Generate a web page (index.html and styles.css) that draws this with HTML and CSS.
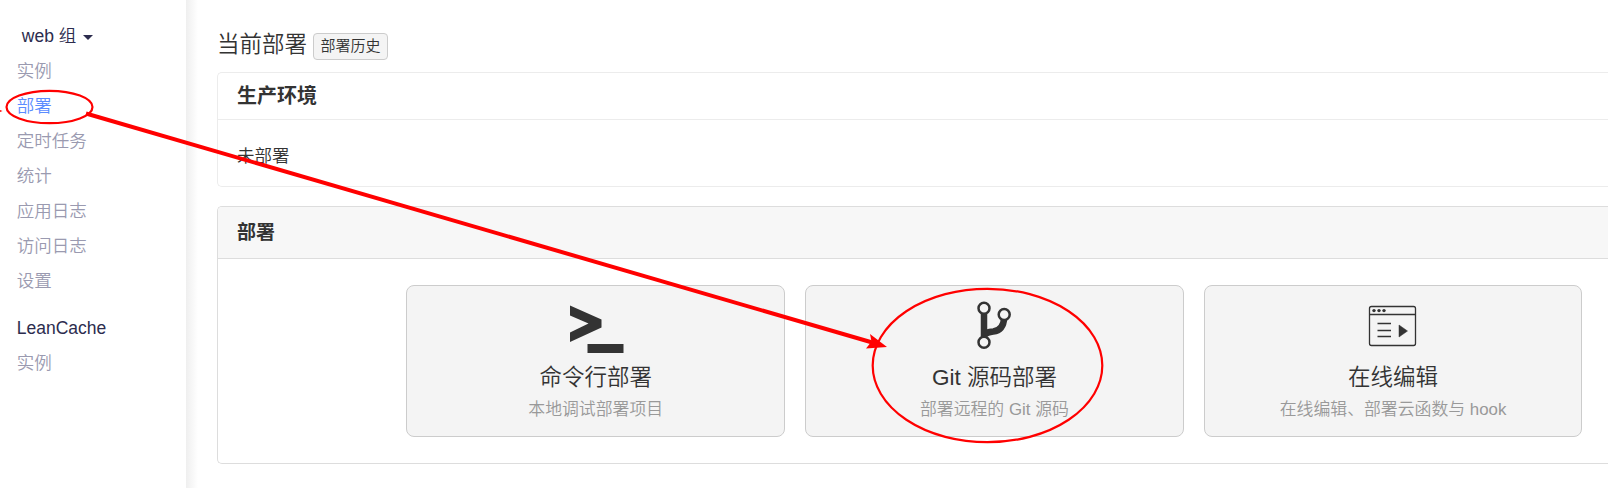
FILE: index.html
```html
<!DOCTYPE html>
<html lang="zh-CN">
<head>
<meta charset="utf-8">
<title>部署</title>
<link rel="stylesheet" href="styles.css">
</head>
<body>
<div class="app">
  <nav class="sidebar">
    <div class="group-switch">web 组 <span class="caret"></span></div>
    <a class="nav-item">实例</a>
    <a class="nav-item active">部署</a>
    <a class="nav-item">定时任务</a>
    <a class="nav-item">统计</a>
    <a class="nav-item">应用日志</a>
    <a class="nav-item">访问日志</a>
    <a class="nav-item">设置</a>
    <div class="nav-title">LeanCache</div>
    <a class="nav-item">实例</a>
  </nav>
  <main class="content">
    <header class="page-head">
      <h1>当前部署</h1>
      <button class="history">部署历史</button>
    </header>
    <section class="panel env">
      <h2>生产环境</h2>
      <p>未部署</p>
    </section>
    <section class="panel deploy">
      <h2>部署</h2>
      <div class="cards">
        <div class="card">
          <svg class="icon" width="60" height="54" viewBox="0 0 60 54"><path fill="#333" d="M4 7.500 35.500 21.500V29.500L4 44V34.500L22.500 25.500 4 17.500z"/><path fill="#333" d="M21.500 46h36v9h-36z"/></svg>
          <h3>命令行部署</h3>
          <p>本地调试部署项目</p>
        </div>
        <div class="card">
          <svg class="icon" width="60" height="54" viewBox="0 0 60 54"><g fill="none" stroke="#333" transform="translate(.5 1.500)"><path stroke-width="6.500" d="M19.500 11v30M39.700 18c-.5 9-4.500 13.300-11 14.100-5 .5-7.700 1.200-9.200 4.700"/><g fill="#f4f4f4" stroke-width="2.500"><circle cx="19.500" cy="8.800" r="5.500"/><circle cx="39.700" cy="15" r="5.500"/><circle cx="19.500" cy="42.800" r="5.500"/></g></g></svg>
          <h3>Git 源码部署</h3>
          <p>部署远程的 Git 源码</p>
        </div>
        <div class="card">
          <svg class="icon" width="60" height="54" viewBox="0 0 60 54"><g transform="translate(0 1)"><g fill="none" stroke="#333" stroke-width="1.300"><rect x="6.500" y="7.500" width="46" height="39" rx="2"/><path d="M6.500 15.500h46M14.500 24.500H28M14.500 31.500H28M14.500 37.500H28"/></g><g fill="#333"><circle cx="11" cy="11.600" r="1.700"/><circle cx="16" cy="11.600" r="1.700"/><circle cx="21" cy="11.600" r="1.700"/><path d="M36 26v12l8.500-6z" stroke="#333" stroke-linejoin="round" stroke-width=".5"/></g></g></svg>
          <h3>在线编辑</h3>
          <p>在线编辑、部署云函数与 hook</p>
        </div>
      </div>
    </section>
  </main>
  <svg class="annotations" width="1608" height="488" viewBox="0 0 1608 488">
    <g fill="none" stroke="#f00" stroke-width="2.200">
      <ellipse cx="49.500" cy="107" rx="43" ry="16.200"/>
      <ellipse cx="987.500" cy="365.500" rx="114.800" ry="76.700"/>
      <path stroke-width="4" d="M86 113.500 874 343"/>
    </g>
    <path fill="#f00" d="M887 347 870 334l1.500 7.500-5.500 7zM0 110l2.500 1-2.500 1z"/>
  </svg>
</div>
</body>
</html>
```
FILE: styles.css
```css
* { box-sizing: border-box; }
body {
  margin: 0;
  background: #fff;
  font-family: "Liberation Sans", "Noto Sans CJK SC", sans-serif;
  font-weight: 350;
  font-size: 17.5px;
  color: #333;
}
h1, h2, h3, p { margin: 0; }
.app { position: relative; display: flex; width: 1608px; height: 488px; overflow: hidden; }
.sidebar {
  display: flex;
  flex-direction: column;
  flex: none;
  width: 186px;
  padding: 19px 0 0 16.8px;
  line-height: 35px;
}
.group-switch { padding-left: 5px; color: #2c2c4e; }
.caret {
  display: inline-block;
  margin-left: 1.5px;
  vertical-align: 2px;
  border: 5px solid transparent;
  border-top-color: #2c2c4e;
  border-bottom: 0;
}
.nav-item { color: #9a9ab0; }
.nav-item.active { color: #5b8cff; }
.nav-title { margin-top: 12px; color: #2c2c4e; }
.content {
  flex: none;
  width: 1422px;
  padding: 29px 0 0 31px;
  background: linear-gradient(90deg, #efefef, #fff 12px);
}
.page-head { display: flex; align-items: center; gap: 6px; height: 32px; }
.page-head h1 { font-size: 22.5px; font-weight: 350; line-height: 32px; }
.history {
  width: 75px;
  height: 27px;
  margin-top: 3px;
  padding: 0 0 2px;
  border: 1px solid #ccc;
  border-radius: 4px;
  background: #f4f4f4;
  color: #333;
  font: inherit;
  font-size: 15px;
  line-height: 22px;
}
.panel {
  border: 1px solid #ddd;
  border-right: 0;
  border-radius: 5px 0 0 5px;
  background: #fff;
  overflow: hidden;
}
.panel h2 { padding-left: 19px; border-bottom: 1px solid #ddd; font-weight: 700; }
.env { height: 115px; margin-top: 11px; border-color: #ececec; }
.env h2 { height: 47px; border-color: #ececec; font-size: 20px; line-height: 47px; }
.env p { padding-left: 19px; line-height: 72px; }
.deploy { height: 258px; margin-top: 19px; }
.deploy h2 { height: 52px; background: #f7f7f7; font-size: 19px; line-height: 52px; }
.cards { display: flex; gap: 20px; padding: 26px 25.6px 0 188.4px; }
.card {
  display: flex;
  flex-direction: column;
  align-items: center;
  flex: 1;
  height: 152px;
  padding-top: 12px;
  border: 1px solid #ccc;
  border-radius: 8px;
  background: #f4f4f4;
}
.icon { display: block; flex: none; overflow: visible; }
.card h3 { margin-top: 9px; font-size: 22.5px; font-weight: 350; line-height: 34px; }
.card p { color: #999; font-size: 16.875px; line-height: 30px; }
.annotations { position: absolute; top: 0; left: 0; }
```
